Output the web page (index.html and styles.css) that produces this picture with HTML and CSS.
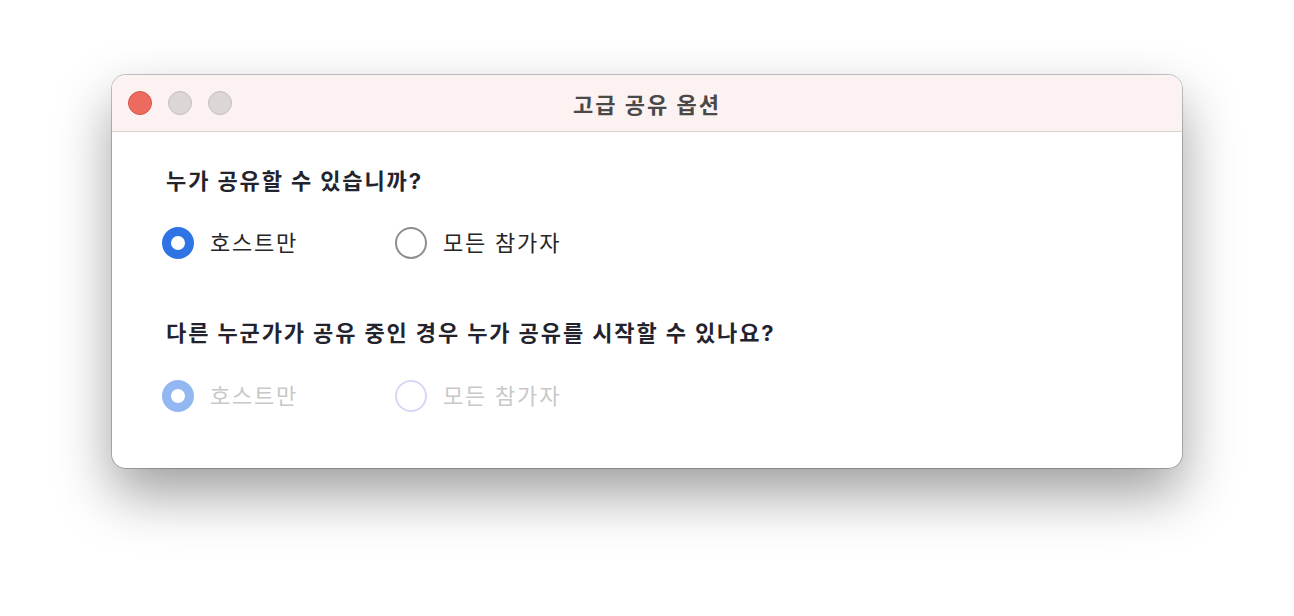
FILE: index.html
```html
<!DOCTYPE html>
<html lang="ko">
<head>
    <meta charset="UTF-8">
    <title>고급 공유 옵션</title>
    <link rel="stylesheet" href="styles.css">
</head>
<body>

<div class="window">
    <div class="titlebar">
        <div class="lights">
            <span class="light close"></span>
            <span class="light"></span>
            <span class="light"></span>
        </div>
        <div class="title">고급 공유 옵션</div>
    </div>
    <div class="content">
        <p class="question">누가 공유할 수 있습니까?</p>
        <div class="options">
            <label class="option"><span class="radio checked"></span>호스트만</label>
            <label class="option"><span class="radio"></span>모든 참가자</label>
        </div>

        <p class="question second">다른 누군가가 공유 중인 경우 누가 공유를 시작할 수 있나요?</p>
        <div class="options disabled">
            <label class="option"><span class="radio checked"></span>호스트만</label>
            <label class="option"><span class="radio"></span>모든 참가자</label>
        </div>
    </div>
</div>

</body>
</html>
```

FILE: styles.css
```css
html {
    min-height: 100%;
}
body {
    margin: 0;
    min-height: 100vh;
    padding-top: 75px;
    box-sizing: border-box;
    background-color: #ffffff;
    font-family: Inter, "Noto Sans CJK KR", sans-serif;
}
.window {
    width: 1070px;
    margin-left: 112px;
    background-color: #ffffff;
    border-radius: 14px;
    overflow: hidden;
    box-shadow: 0 0 0 1px rgba(0, 0, 0, 0.22), 0 26px 55px rgba(0, 0, 0, 0.38);
}
.titlebar {
    position: relative;
    height: 56px;
    background-color: #fcf2f2;
    border-bottom: 1px solid #d9d4d4;
    display: flex;
    align-items: center;
    justify-content: center;
}
.lights {
    position: absolute;
    left: 16px;
    top: 16px;
    display: flex;
    gap: 16px;
}
.light {
    width: 22px;
    height: 22px;
    border-radius: 50%;
    background-color: #ddd6d6;
    border: 1px solid #c6bebe;
}
.light.close {
    background-color: #ed6a5e;
    border-color: #d4554a;
}
.title {
    font-size: 22px;
    font-weight: 700;
    letter-spacing: 2px;
    color: #4b4848;
}
.content {
    padding: 34px 50px 56px 50px;
}
.question {
    margin: 0 0 0 4px;
    font-size: 22px;
    line-height: 30px;
    font-weight: 700;
    letter-spacing: 1.9px;
    color: #23232e;
}
.question.second {
    margin-top: 59px;
}
.options {
    display: flex;
    margin-top: 31px;
}
.disabled {
    margin-top: 32px;
}
.option {
    display: flex;
    align-items: center;
    gap: 16px;
    width: 233px;
    font-size: 22px;
    line-height: 32px;
    letter-spacing: 1.8px;
    color: #252525;
}
.radio {
    box-sizing: border-box;
    width: 32px;
    height: 32px;
    border-radius: 50%;
    border: 2px solid #8d8d8d;
    background-color: #ffffff;
}
.radio.checked {
    border: 9px solid #2f74e4;
}
.disabled .option {
    color: #c8c8c8;
}
.disabled .radio {
    border-color: #d6d9f5;
}
.disabled .radio.checked {
    border-color: #93b8f1;
}
```
